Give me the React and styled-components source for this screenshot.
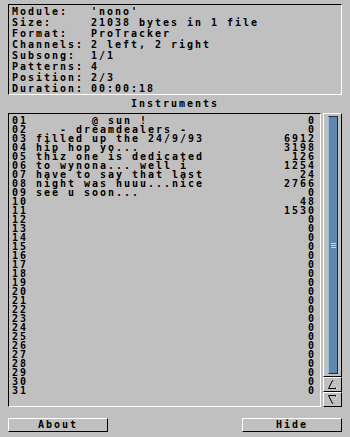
import React from 'react';
import styled, { createGlobalStyle } from 'styled-components';

const info = [
  ['Module:', "'nono'"],
  ['Size:', '21038 bytes in 1 file'],
  ['Format:', 'ProTracker'],
  ['Channels:', '2 left, 2 right'],
  ['Subsong:', '1/1'],
  ['Patterns:', '4'],
  ['Position:', '2/3'],
  ['Duration:', '00:00:18'],
];

const named = [
  ['       @ sun !', 0],
  ['   - dreamdealers -', 0],
  ['filled up the 24/9/93', 6912],
  ['hip hop yo...', 3198],
  ['thiz one is dedicated', 126],
  ['to wynona... well i', 1254],
  ['have to say that last', 24],
  ['night was huuu...nice', 2766],
  ['see u soon...', 0],
  ['', 48],
  ['', 1530],
];

const instruments = Array.from({ length: 31 }, (_, i) => {
  const [name, size] = named[i] || ['', 0];
  return { num: String(i + 1).padStart(2, '0'), name, size };
});

const Global = createGlobalStyle`
  body {
    margin: 0;
    background: #c0c0c0;
  }
`;

const Window = styled.div`
  width: 350px;
  height: 437px;
  box-sizing: border-box;
  padding: 4px 8px 0 8px;
  background: #c0c0c0;
  color: #000;
  font-family: "DejaVu Sans Mono", "Liberation Mono", monospace;
  font-weight: 700;
  font-size: 10px;
  letter-spacing: 1.98px;
  display: flex;
  flex-direction: column;
`;

const InfoBox = styled.div`
  height: 91px;
  box-sizing: border-box;
  border-style: solid;
  border-width: 1px;
  border-color: #000 #fff #fff #000;
  padding: 1px 0 0 3px;
`;

const InfoRow = styled.div`
  display: flex;
  height: 11px;
  line-height: 11px;
  white-space: pre;
`;

const Label = styled.span`
  width: 79px;
`;

const Heading = styled.div`
  height: 18px;
  line-height: 18px;
  text-align: center;
`;

const ListArea = styled.div`
  display: flex;
  gap: 2px;
  height: 294px;
`;

const List = styled.div`
  flex: 1;
  box-sizing: border-box;
  border-style: solid;
  border-width: 1px;
  border-color: #000 #fff #fff #000;
  padding: 2px 4px 0 3px;
  overflow: hidden;
`;

const Row = styled.div`
  display: flex;
  justify-content: space-between;
  height: 9px;
  line-height: 9px;
  white-space: pre;
`;

const Scroller = styled.div`
  width: 19px;
  display: flex;
  flex-direction: column;
`;

const Track = styled.div`
  flex: 1;
  box-sizing: border-box;
  border-style: solid;
  border-width: 1px;
  border-color: #fff #000 #000 #fff;
  padding: 2px 3px 2px 4px;
  display: flex;
`;

const Knob = styled.div`
  flex: 1;
  box-sizing: border-box;
  background: #5f87ae;
  border-style: solid;
  border-width: 1px;
  border-color: #1e2e40 #1e2e40 #1e2e40 #9fbad4;
  display: flex;
  align-items: center;
  justify-content: center;
`;

const Arrow = styled.div`
  height: 15px;
  box-sizing: border-box;
  border-style: solid;
  border-width: 1px;
  border-color: #fff #000 #000 #fff;
  display: flex;
  align-items: center;
  justify-content: center;
`;

const Footer = styled.div`
  display: flex;
  justify-content: space-between;
  margin-top: 11px;
`;

const Button = styled.div`
  width: 100px;
  height: 14px;
  box-sizing: border-box;
  border-style: solid;
  border-width: 1px;
  border-color: #fff #000 #000 #fff;
  line-height: 12px;
  text-align: center;
`;

const Grip = () => (
  <svg width="5" height="7" viewBox="0 0 5 7">
    <path d="M0 1.5H5M0 3.5H5M0 5.5H5" stroke="#c8d8e8" strokeWidth="1" />
  </svg>
);

const Tri = ({ up }) => (
  <svg width="11" height="11" viewBox="0 0 11 11">
    {up ? (
      <>
        <path d="M1.5 9.5L5.5 1.5L9.5 9.5Z" fill="none" stroke="#000" strokeWidth="1" />
        <path d="M6 2.5L10 10" stroke="#fff" strokeWidth="1" />
      </>
    ) : (
      <>
        <path d="M1.5 1.5L5.5 9.5L9.5 1.5Z" fill="none" stroke="#000" strokeWidth="1" />
        <path d="M6 8.5L10 1" stroke="#fff" strokeWidth="1" />
      </>
    )}
  </svg>
);

export default function App() {
  return (
    <Window>
      <Global />
      <InfoBox>
        {info.map(([k, v]) => (
          <InfoRow key={k}>
            <Label>{k}</Label>
            <span>{v}</span>
          </InfoRow>
        ))}
      </InfoBox>
      <Heading>Instruments</Heading>
      <ListArea>
        <List>
          {instruments.map((it) => (
            <Row key={it.num}>
              <span>{it.num} {it.name}</span>
              <span>{it.size}</span>
            </Row>
          ))}
        </List>
        <Scroller>
          <Track>
            <Knob>
              <Grip />
            </Knob>
          </Track>
          <Arrow><Tri up /></Arrow>
          <Arrow><Tri /></Arrow>
        </Scroller>
      </ListArea>
      <Footer>
        <Button>About</Button>
        <Button>Hide</Button>
      </Footer>
    </Window>
  );
}
